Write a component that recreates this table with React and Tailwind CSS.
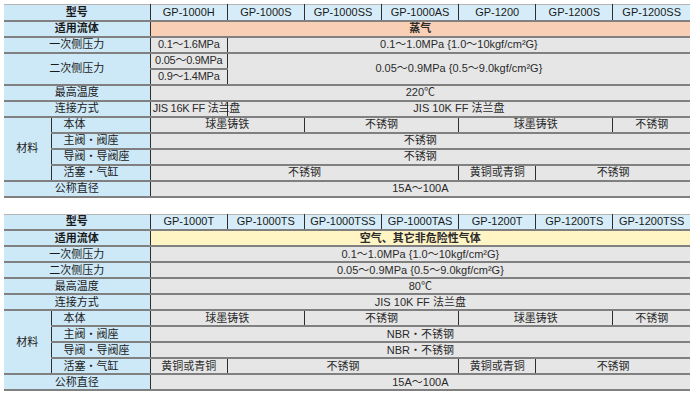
const font = "font-['Liberation_Sans','Noto_Sans_CJK_SC',sans-serif]";

const Label = ({ children, colSpan, rowSpan, bold, left, head }) => (
  <td
    colSpan={colSpan}
    rowSpan={rowSpan}
    className={`h-[16px] p-0 leading-[13px] bg-[#cde8f7] text-[11px] text-[#1a1a1a] border-y-2 border-y-[#808080] border-r border-r-[#2e2e2e] ${
      left ? "text-left pl-[12px]" : "text-center"
    } ${bold ? "font-bold" : ""} ${head ? "border-t border-t-[#b5b5b5]" : ""}`}
  >
    {children}
  </td>
);

const Cell = ({ children, colSpan, rowSpan, last, className = "" }) => (
  <td
    colSpan={colSpan}
    rowSpan={rowSpan}
    className={`h-[16px] p-0 leading-[13px] bg-[#e6e6e6] text-[11px] text-[#2a2a2a] text-center whitespace-nowrap border-y-2 border-y-[#808080] border-l border-l-[#2e2e2e] ${
      last ? "" : "border-r border-r-[#2e2e2e]"
    } ${className}`}
  >
    {children}
  </td>
);

const Head = ({ models }) => (
  <tr>
    <Label colSpan={2} bold head>型号</Label>
    {models.map((m, i) => (
      <td
        key={m}
        className={`h-[16px] p-0 leading-[13px] bg-[#d6edf9] text-[11px] text-[#1a1a1a] text-center border-t border-t-[#b5b5b5] border-b-2 border-b-[#808080] border-l border-l-[#2e2e2e] ${
          i < models.length - 1 ? "border-r border-r-[#2e2e2e]" : ""
        }`}
      >
        {m}
      </td>
    ))}
  </tr>
);

const Cols = () => (
  <colgroup>
    <col className="w-[47px]" />
    <col className="w-[99px]" />
    {[0, 1, 2, 3, 4, 5, 6].map((i) => (
      <col key={i} className="w-[77px]" />
    ))}
  </colgroup>
);

const App = () => {
  return (
    <div className={`w-[700px] h-[400px] bg-white pt-[4px] pl-[4px] ${font}`}>
      <table className="border-collapse table-fixed w-[686px]">
        <Cols />
        <tbody>
          <Head models={["GP-1000H", "GP-1000S", "GP-1000SS", "GP-1000AS", "GP-1200", "GP-1200S", "GP-1200SS"]} />
          <tr>
            <Label colSpan={2} bold>适用流体</Label>
            <Cell colSpan={7} last className="bg-[#f9cfb5] font-bold text-[#1a1a1a]">蒸气</Cell>
          </tr>
          <tr>
            <Label colSpan={2}>一次侧压力</Label>
            <Cell className="tracking-tight">0.1～1.6MPa</Cell>
            <Cell colSpan={6} last>0.1～1.0MPa {"{"}1.0～10kgf/cm²G{"}"}</Cell>
          </tr>
          <tr>
            <Label colSpan={2} rowSpan={2}>二次侧压力</Label>
            <Cell className="tracking-tight">0.05～0.9MPa</Cell>
            <Cell colSpan={6} rowSpan={2} last>0.05～0.9MPa {"{"}0.5～9.0kgf/cm²G{"}"}</Cell>
          </tr>
          <tr>
            <Cell className="tracking-tight">0.9～1.4MPa</Cell>
          </tr>
          <tr>
            <Label colSpan={2}>最高温度</Label>
            <Cell colSpan={7} last>220℃</Cell>
          </tr>
          <tr>
            <Label colSpan={2}>连接方式</Label>
            <Cell className="text-left pl-[2px] text-[10px] tracking-tight">JIS 16K FF 法兰盘</Cell>
            <Cell colSpan={6} last>JIS 10K FF 法兰盘</Cell>
          </tr>
          <tr>
            <Label rowSpan={4}>材料</Label>
            <Label left>本体</Label>
            <Cell colSpan={2}>球墨铸铁</Cell>
            <Cell colSpan={2}>不锈钢</Cell>
            <Cell colSpan={2}>球墨铸铁</Cell>
            <Cell last>不锈钢</Cell>
          </tr>
          <tr>
            <Label left>主阀・阀座</Label>
            <Cell colSpan={7} last>不锈钢</Cell>
          </tr>
          <tr>
            <Label left>导阀・导阀座</Label>
            <Cell colSpan={7} last>不锈钢</Cell>
          </tr>
          <tr>
            <Label left>活塞・气缸</Label>
            <Cell colSpan={4}>不锈钢</Cell>
            <Cell>黄铜或青铜</Cell>
            <Cell colSpan={2} last>不锈钢</Cell>
          </tr>
          <tr>
            <Label colSpan={2}>公称直径</Label>
            <Cell colSpan={7} last>15A～100A</Cell>
          </tr>
        </tbody>
      </table>

      <table className="border-collapse table-fixed w-[686px] mt-[16px]">
        <Cols />
        <tbody>
          <Head models={["GP-1000T", "GP-1000TS", "GP-1000TSS", "GP-1000TAS", "GP-1200T", "GP-1200TS", "GP-1200TSS"]} />
          <tr>
            <Label colSpan={2} bold>适用流体</Label>
            <Cell colSpan={7} last className="bg-[#fff4c4] font-bold text-[#1a1a1a]">空气、其它非危险性气体</Cell>
          </tr>
          <tr>
            <Label colSpan={2}>一次侧压力</Label>
            <Cell colSpan={7} last>0.1～1.0MPa {"{"}1.0～10kgf/cm²G{"}"}</Cell>
          </tr>
          <tr>
            <Label colSpan={2}>二次侧压力</Label>
            <Cell colSpan={7} last>0.05～0.9MPa {"{"}0.5～9.0kgf/cm²G{"}"}</Cell>
          </tr>
          <tr>
            <Label colSpan={2}>最高温度</Label>
            <Cell colSpan={7} last>80℃</Cell>
          </tr>
          <tr>
            <Label colSpan={2}>连接方式</Label>
            <Cell colSpan={7} last>JIS 10K FF 法兰盘</Cell>
          </tr>
          <tr>
            <Label rowSpan={4}>材料</Label>
            <Label left>本体</Label>
            <Cell colSpan={2}>球墨铸铁</Cell>
            <Cell colSpan={2}>不锈钢</Cell>
            <Cell colSpan={2}>球墨铸铁</Cell>
            <Cell last>不锈钢</Cell>
          </tr>
          <tr>
            <Label left>主阀・阀座</Label>
            <Cell colSpan={7} last>NBR・不锈钢</Cell>
          </tr>
          <tr>
            <Label left>导阀・导阀座</Label>
            <Cell colSpan={7} last>NBR・不锈钢</Cell>
          </tr>
          <tr>
            <Label left>活塞・气缸</Label>
            <Cell>黄铜或青铜</Cell>
            <Cell colSpan={3}>不锈钢</Cell>
            <Cell>黄铜或青铜</Cell>
            <Cell colSpan={2} last>不锈钢</Cell>
          </tr>
          <tr>
            <Label colSpan={2}>公称直径</Label>
            <Cell colSpan={7} last>15A～100A</Cell>
          </tr>
        </tbody>
      </table>
    </div>
  );
};

export default App;
